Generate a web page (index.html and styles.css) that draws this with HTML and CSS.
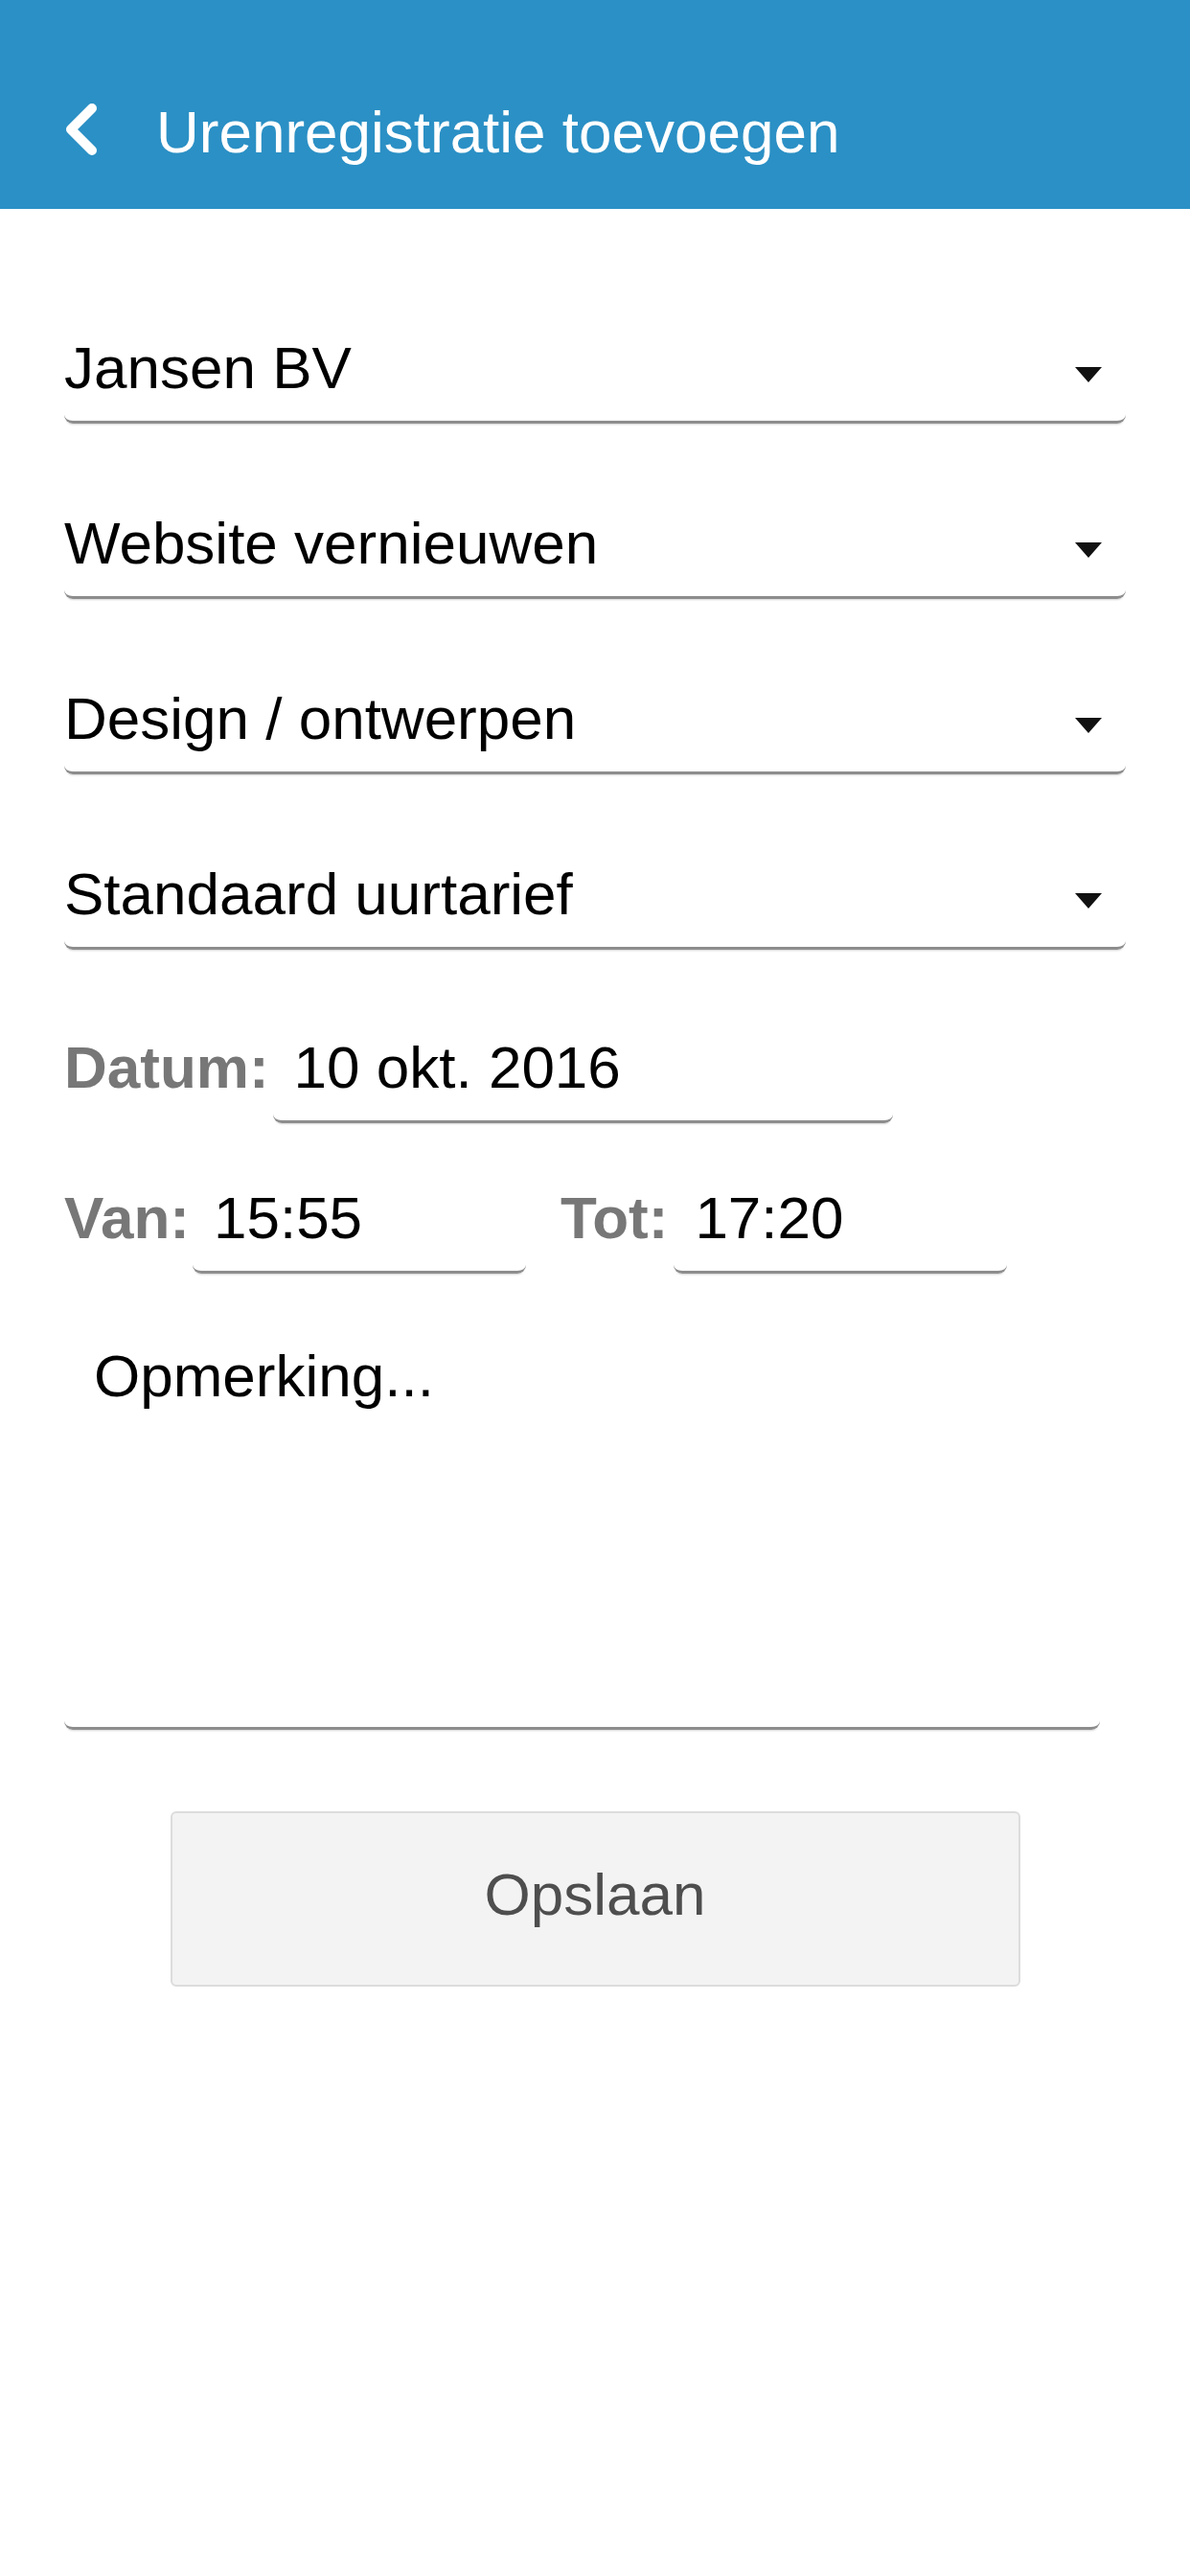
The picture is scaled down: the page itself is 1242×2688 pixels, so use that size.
FILE: index.html
```html
<!DOCTYPE html>
<html lang="nl">
<head>
<meta charset="utf-8">
<title>Urenregistratie toevoegen</title>
<link rel="stylesheet" href="styles.css">
</head>
<body>
<header class="topbar">
  <svg class="back" viewBox="0 0 34 54" width="34" height="54" aria-hidden="true">
    <path d="M29 5 L7 27 L29 49" fill="none" stroke="#fff" stroke-width="10" stroke-linecap="round" stroke-linejoin="round"/>
  </svg>
  <h1 class="title">Urenregistratie toevoegen</h1>
</header>
<main class="form">
  <div class="field select"><span>Jansen BV</span><i class="caret"></i></div>
  <div class="field select"><span>Website vernieuwen</span><i class="caret"></i></div>
  <div class="field select"><span>Design / ontwerpen</span><i class="caret"></i></div>
  <div class="field select"><span>Standaard uurtarief</span><i class="caret"></i></div>

  <div class="row row-date">
    <span class="label">Datum:</span>
    <div class="field input input-date">10 okt. 2016</div>
  </div>

  <div class="row row-time">
    <span class="label">Van:</span>
    <div class="field input input-time input-from">15:55</div>
    <span class="label label-tot">Tot:</span>
    <div class="field input input-time input-to">17:20</div>
  </div>

  <div class="field remark">Opmerking...</div>

  <div class="actions">
    <button class="save" type="button">Opslaan</button>
  </div>
</main>
</body>
</html>
```
FILE: styles.css
```css
* { box-sizing: border-box; }

html, body {
  margin: 0;
  padding: 0;
  background: #ffffff;
}

body {
  width: 1242px;
  min-height: 2688px;
  font-family: "Liberation Sans", Arial, Helvetica, sans-serif;
  font-size: 62px;
  color: #000;
}

.topbar {
  height: 218px;
  background: #2b90c5;
  display: flex;
  align-items: flex-start;
  padding: 108px 0 0 67px;
}

.back {
  display: block;
  flex: none;
  margin-right: 62px;
}

.title {
  margin: 0;
  padding-top: 3px;
  font-size: 62px;
  font-weight: normal;
  line-height: 54px;
  color: #ffffff;
  white-space: nowrap;
}

.form {
  padding: 131px 67px 0 67px;
}

.field {
  line-height: 70px;
  height: 93px;
  padding-bottom: 20px;
  border-bottom: 3px solid #8d8d8d;
  border-radius: 0 0 9px 9px;
  box-shadow: 0 3px 2px -2px rgba(0, 0, 0, 0.18);
  white-space: nowrap;
}

.select {
  display: flex;
  justify-content: space-between;
  align-items: flex-start;
  margin-bottom: 90px;
}

.caret {
  display: block;
  width: 0;
  height: 0;
  margin-top: 34px;
  margin-right: 25px;
  border-left: 14px solid transparent;
  border-right: 14px solid transparent;
  border-top: 16px solid #111;
}

.row {
  display: flex;
  align-items: flex-start;
}

.row-date {
  margin-top: -2px;
}

.row-time {
  margin-top: 64px;
}

.label {
  line-height: 70px;
  font-weight: bold;
  color: #777777;
  white-space: nowrap;
}

.label-tot {
  margin-left: 36px;
}

.input {
  padding-left: 22px;
}

.input-date {
  width: 647px;
  margin-left: 4px;
}

.input-time {
  width: 348px;
}

.input-from {
  margin-left: 3px;
}

.input-to {
  margin-left: 6px;
}

.remark {
  margin-top: 72px;
  width: 1081px;
  height: 404px;
  padding-left: 31px;
}

.actions {
  display: flex;
  justify-content: center;
  margin-top: 85px;
}

.save {
  width: 887px;
  height: 183px;
  background: #f3f3f3;
  border: 2px solid #dcdcdc;
  border-radius: 6px;
  font-family: "Liberation Sans", Arial, Helvetica, sans-serif;
  font-size: 62px;
  color: #4e4e4e;
  padding: 0 0 10px 0;
  margin: 0;
}
```
